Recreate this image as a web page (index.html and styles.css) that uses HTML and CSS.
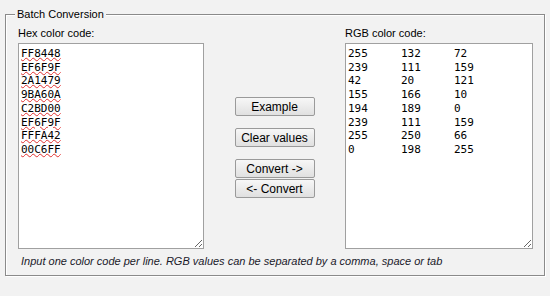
FILE: index.html
```html
<!DOCTYPE html>
<html>
<head>
<meta charset="utf-8">
<link rel="stylesheet" href="styles.css">
</head>
<body>
<fieldset class="batch">
  <legend class="batch-legend">Batch Conversion</legend>
  <div class="batch-grid">
    <div class="col">
      <label class="col-label" for="hex">Hex color code:</label>
      <textarea id="hex" class="codes codes-hex" spellcheck="false">FF8448
EF6F9F
2A1479
9BA60A
C2BD00
EF6F9F
FFFA42
00C6FF</textarea>
    </div>
    <div class="actions">
      <button class="btn">Example</button>
      <button class="btn btn-clear">Clear values</button>
      <div class="convert-pair">
        <button class="btn">Convert -&gt;</button>
        <button class="btn">&lt;- Convert</button>
      </div>
    </div>
    <div class="col">
      <label class="col-label" for="rgb">RGB color code:</label>
      <textarea id="rgb" class="codes" spellcheck="false">255	132	72
239	111	159
42	20	121
155	166	10
194	189	0
239	111	159
255	250	66
0	198	255</textarea>
    </div>
    <p class="hint">Input one color code per line. RGB values can be separated by a comma, space or tab</p>
  </div>
</fieldset>
</body>
</html>
```

FILE: styles.css
```css
html, body {
  margin: 0;
  padding: 0;
  background: #f2f2f2;
}
body {
  font-family: "Liberation Sans", Arial, sans-serif;
  font-size: 11px;
  color: #000;
  width: 550px;
  height: 296px;
  overflow: hidden;
}
.batch {
  margin: 8px 5px 0 5px;
  padding: 0 11px 7px 12px;
  border: 1px solid #8a8a8a;
  box-shadow: inset 1px 1px 0 #ffffff, 1px 1px 0 #ffffff;
  min-width: 0;
}
.batch-legend {
  margin-left: -3px;
  padding: 0 2px;
  line-height: 13px;
  font-size: 11px;
  background: #f2f2f2;
}
.batch-grid {
  display: grid;
  grid-template-columns: 186px 1fr 188px;
  padding-top: 6px;
}
.col {
  display: flex;
  flex-direction: column;
}
.col-label {
  line-height: 13px;
  margin-bottom: 3px;
}
.codes {
  box-sizing: border-box;
  width: 100%;
  height: 206px;
  margin: 0;
  border: 1px solid #a0a0a0;
  padding: 3px 2px 2px 2px;
  background: #fff;
  font-family: "DejaVu Sans Mono", monospace;
  font-size: 11px;
  line-height: 13.7px;
  color: #000;
  tab-size: 8;
  -moz-tab-size: 8;
  white-space: pre;
  overflow: hidden;
  resize: both;
}
.codes-hex {
  text-decoration: underline wavy #e03030;
  text-decoration-thickness: 1px;
  text-underline-offset: 0px;
}
.actions {
  display: flex;
  flex-direction: column;
  align-items: center;
  padding-top: 70px;
}
.btn {
  box-sizing: border-box;
  width: 80px;
  height: 19px;
  margin: 0;
  padding: 0;
  border: 1px solid #9a9a9a;
  border-radius: 2px;
  background: linear-gradient(#f7f7f7, #e0e0e0);
  font-family: "Liberation Sans", Arial, sans-serif;
  font-size: 12px;
  line-height: 16px;
  color: #000;
}
.btn-clear {
  margin-top: 12px;
}
.convert-pair {
  display: flex;
  flex-direction: column;
  gap: 1px;
  margin-top: 12px;
}
.hint {
  grid-column: 1 / -1;
  margin: 6px 0 0 3px;
  line-height: 13px;
  font-style: italic;
  font-size: 11px;
  color: #1a1a2a;
}
```
